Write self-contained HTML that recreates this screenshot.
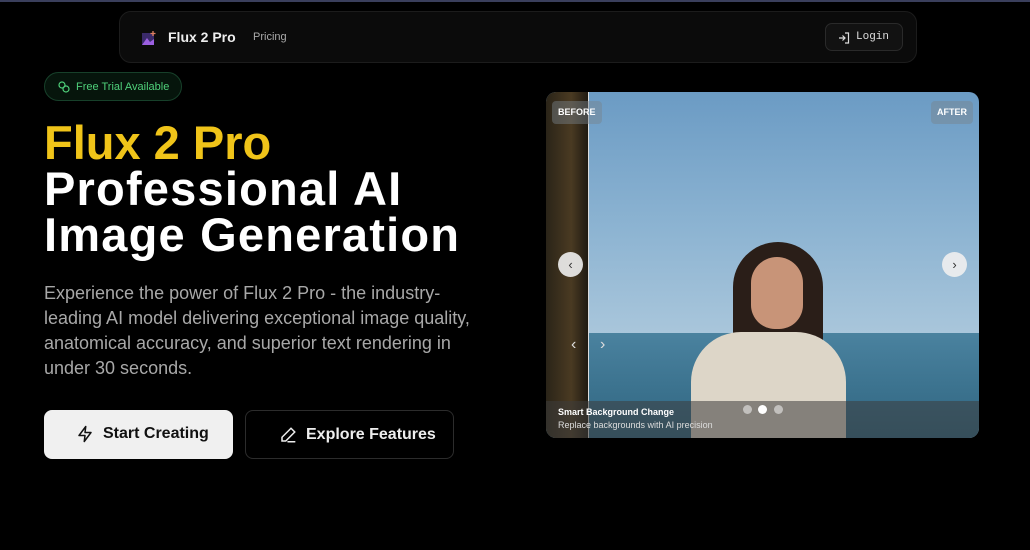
<!DOCTYPE html>
<html><head><meta charset="utf-8"><style>
*{margin:0;padding:0;box-sizing:border-box}
body{width:1030px;height:550px;background:#000;overflow:hidden;position:relative;font-family:"Liberation Sans",sans-serif;color:#fff}
.topline{position:absolute;left:0;top:0;width:1030px;height:2px;background:#3a3f5c}
.nav{position:absolute;left:119px;top:11px;width:798px;height:52px;background:#0b0b0b;border:1px solid #1c1c1c;border-radius:12px}
.logo{position:absolute;left:21px;top:18px;width:16px;height:16px}
.brand{position:absolute;left:48px;top:17px;font-weight:bold;font-size:14px;color:#eee}
.pricing{position:absolute;left:133px;top:19px;font-size:11px;color:#aaa}
.login{position:absolute;right:13px;top:11px;width:78px;height:28px;border:1px solid #2a2a2a;border-radius:7px;background:#121212;font-family:"Liberation Mono",monospace;font-size:11px;color:#ddd;padding:7px 0 0 30px}
.login svg{position:absolute;left:12px;top:8px}
.badge{position:absolute;left:44px;top:72px;width:138px;height:29px;border:1px solid #17402a;background:#06150c;border-radius:15px;font-size:11px;color:#4fd07a;padding:8px 0 0 31px}
.badge svg{position:absolute;left:13px;top:8px}
h1{position:absolute;left:44px;top:120px;font-size:47px;line-height:46px;font-weight:bold;letter-spacing:1.2px;white-space:nowrap}
h1 .y{color:#f0c419;letter-spacing:0}
.p{position:absolute;left:44px;top:281px;font-size:18px;line-height:25px;color:#a8a8a8;white-space:nowrap}
.btn{position:absolute;top:410px;height:49px;border-radius:8px;font-weight:bold;font-size:16px;padding-top:15px}
.b1{left:44px;width:189px;background:#f0f0f0;color:#111;padding-left:59px}
.b2{left:245px;width:209px;border:1px solid #2c2c2c;color:#eee;padding-left:60px}
.btn svg{position:absolute;left:32px;top:15px}
.b2 svg{left:33px}
.img{position:absolute;left:546px;top:92px;width:433px;height:346px;border-radius:10px;overflow:hidden;background:linear-gradient(#6b9bc4 0%,#8db4d2 40%,#a9c6db 70%,#b5cfdf 100%)}
.sea{position:absolute;left:0;top:241px;width:100%;height:105px;background:linear-gradient(#4a829f,#2f6580)}
.before{position:absolute;left:0;top:0;width:43px;height:100%;background:linear-gradient(90deg,#2a2418,#4a3a22 60%,#1f1a12);border-right:1px solid #ddd}
.hair{position:absolute;left:187px;top:150px;width:90px;height:140px;border-radius:45px 45px 20px 20px;background:#2a1e18}
.face{position:absolute;left:205px;top:165px;width:52px;height:72px;border-radius:26px 26px 24px 24px;background:#c89478}
.shirt{position:absolute;left:145px;top:240px;width:155px;height:120px;border-radius:50px 50px 0 0;background:#ddd6c8}
.tag{position:absolute;top:9px;height:23px;padding:6px 6px;font-size:9px;font-weight:bold;background:rgba(120,130,140,.45);border-radius:4px;color:#fff}
.circ{position:absolute;top:160px;width:25px;height:25px;border-radius:50%;background:rgba(240,240,240,.9);color:#333;font-size:13px;text-align:center;line-height:25px}
.cap{position:absolute;left:0;top:309px;width:100%;height:37px;background:rgba(60,60,60,.55);padding:6px 12px;font-size:9px}
.dot{position:absolute;top:4px;width:9px;height:9px;border-radius:50%;background:rgba(255,255,255,.5)}
</style></head><body>
<div class="topline"></div>
<div class="nav">
<svg class="logo" viewBox="0 0 16 16"><rect x="1" y="3" width="12" height="12" fill="#3a2a6a"/><path d="M1 15 L6 8 L9 12 L13 9 L13 15Z" fill="#9b5fe0"/><path d="M12 1v5M9.5 3.5h5" stroke="#e08060" stroke-width="1.3"/></svg>
<div class="brand">Flux 2 Pro</div>
<div class="pricing">Pricing</div>
<div class="login"><svg width="12" height="12" viewBox="0 0 12 12" fill="none" stroke="#ddd" stroke-width="1.2"><path d="M7 1h3.5v10H7M1 6h6M4.5 3.5L7 6 4.5 8.5"/></svg>Login</div>
</div>
<div class="badge"><svg width="12" height="12" viewBox="0 0 12 12" fill="none" stroke="#4fd07a" stroke-width="1.2"><circle cx="4" cy="4" r="3"/><circle cx="8" cy="8" r="3"/></svg>Free Trial Available</div>
<h1><span class="y">Flux 2 Pro</span><br>Professional AI<br>Image Generation</h1>
<div class="p">Experience the power of Flux 2 Pro - the industry-<br>leading AI model delivering exceptional image quality,<br>anatomical accuracy, and superior text rendering in<br>under 30 seconds.</div>
<div class="btn b1"><svg width="18" height="18" viewBox="0 0 24 24" fill="none" stroke="#111" stroke-width="2" stroke-linejoin="round"><path d="M13 2L4 14h8l-1 8 9-12h-8z"/></svg>Start Creating</div>
<div class="btn b2"><svg width="18" height="18" viewBox="0 0 24 24" fill="none" stroke="#eee" stroke-width="2" stroke-linecap="round"><path d="M16 3l5 5L9 20H4v-5zM12 21h9"/></svg>Explore Features</div>
<div class="img">
<div class="sea"></div>
<div class="hair"></div><div class="face"></div><div class="shirt"></div>
<div class="before"></div>
<div class="tag" style="left:6px">BEFORE</div>
<div class="tag" style="right:6px">AFTER</div>
<div class="circ" style="left:12px">‹</div>
<div class="circ" style="right:12px">›</div>
<div style="position:absolute;left:25px;top:244px;color:#ddd;font-size:16px">‹</div>
<div style="position:absolute;left:54px;top:244px;color:#ddd;font-size:16px">›</div>
<div class="cap"><div class="dot" style="left:197px"></div><div class="dot" style="left:212px;background:#fff"></div><div class="dot" style="left:228px"></div><b>Smart Background Change</b><br><span style="color:#ddd;line-height:16px">Replace backgrounds with AI precision</span></div>
</div>
</body></html>
